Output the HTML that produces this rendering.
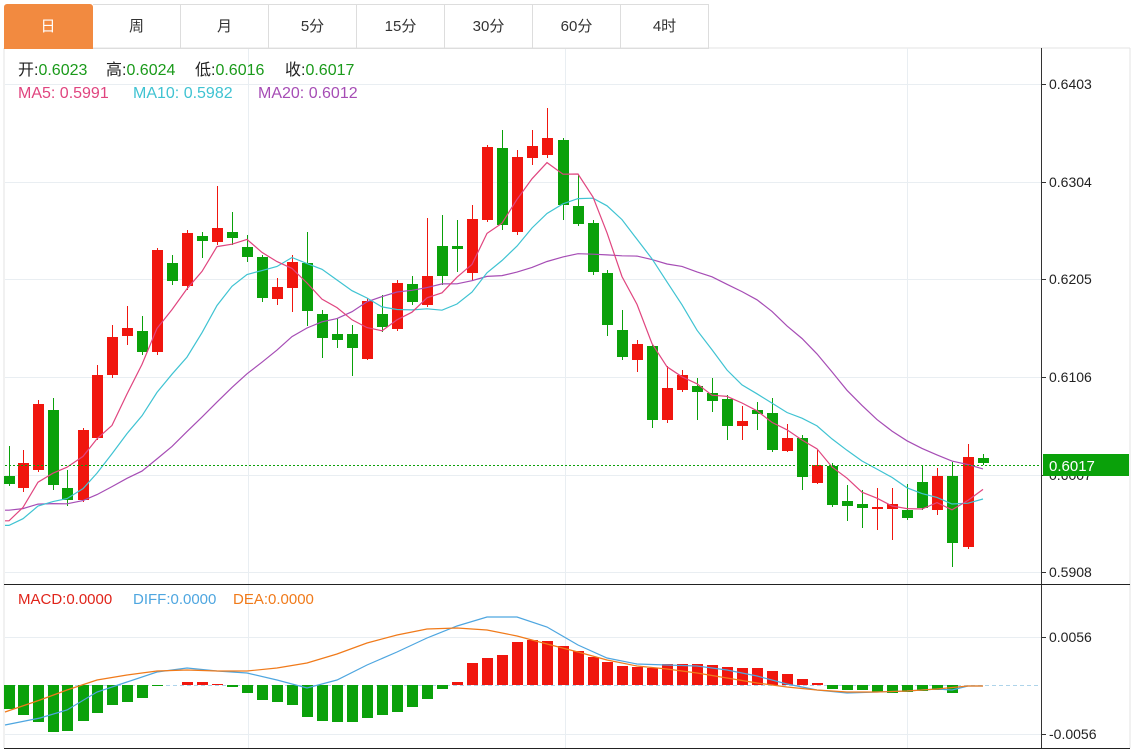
<!DOCTYPE html>
<html><head><meta charset="utf-8"><style>
body{margin:0;width:1135px;height:751px;background:#fff;overflow:hidden;font-family:"Liberation Sans","Noto Sans CJK SC",sans-serif}
svg{position:absolute;left:0;top:0}
.tabs{position:absolute;left:4px;top:4px;height:44px;display:flex}
.tab{width:87px;height:43px;border:1px solid #ddd;border-left:none;text-align:center;line-height:43px;font-size:15px;color:#333;box-sizing:content-box}
.tab.on{background:#f28a40;color:#fff;border-color:#f28a40;border-radius:3px 3px 0 0;width:88px}
</style></head><body>
<svg id="s" width="1135" height="751" font-family="Liberation Sans, Noto Sans CJK SC, sans-serif"></svg>
<div class="tabs"><div class="tab on">日</div><div class="tab">周</div><div class="tab">月</div><div class="tab">5分</div><div class="tab">15分</div><div class="tab">30分</div><div class="tab">60分</div><div class="tab">4时</div></div>
<script>
var S='';
function L(x1,y1,x2,y2,c,w,d){S+='<line x1="'+x1+'" y1="'+y1+'" x2="'+x2+'" y2="'+y2+'" stroke="'+c+'" stroke-width="'+(w||1)+'"'+(d?' stroke-dasharray="'+d+'"':'')+'/>';}
function T(x,y,t,c,sz){S+='<text x="'+x+'" y="'+y+'" fill="'+c+'" font-size="'+(sz||14)+'">'+t+'</text>';}
L(4,48,1130,48,'#e3e3e3');L(1130,48,1130,748,'#e3e3e3');L(4,48,4,748,'#e3e3e3');
[84,182,279,377,475,572,637,734].forEach(function(y){L(5,y+.5,1041,y+.5,'#e9eef2');});
[248,565,907].forEach(function(x){L(x+.5,48,x+.5,748,'#e9eef2');});
L(1041.5,48,1041.5,748,'#333');L(4,584.5,1130,584.5,'#222');L(4,748.5,1130,748.5,'#222');
var tk=[[84,'0.6403'],[182,'0.6304'],[279,'0.6205'],[377,'0.6106'],[475,'0.6007'],[572,'0.5908'],[637,'0.0056'],[734,'-0.0056']];
tk.forEach(function(t){L(1041,t[0]+.5,1046,t[0]+.5,'#333');T(1049,t[0]+5,t[1],'#222',14);});
var C=[[9,476,484,446,486,0],[23,488,463,450,492,1],[38,470,404,400,472,1],[53,410,485,398,490,0],[67,488,500,470,506,0],[83,500,430,428,502,1],[97,438,375,365,440,1],[112,375,337,325,378,1],[127,336,328,306,345,1],[142,331,352,316,355,0],[157,352,250,248,355,1],[172,263,281,255,285,0],[187,286,233,230,290,1],[202,236,241,232,258,0],[217,242,228,186,245,1],[232,232,238,212,245,0],[247,247,257,235,262,0],[262,257,298,255,302,0],[277,299,287,278,305,1],[292,288,262,255,312,1],[307,263,311,232,326,0],[322,314,338,310,358,0],[337,334,340,318,348,0],[352,334,348,325,376,0],[367,359,301,298,360,1],[382,314,327,295,332,0],[397,329,283,280,331,1],[412,284,302,276,305,0],[427,305,276,218,307,1],[442,246,276,215,285,0],[457,246,249,220,272,0],[472,273,219,205,280,1],[487,220,147,145,222,1],[502,148,225,130,230,0],[517,232,157,150,235,1],[532,158,146,130,165,1],[547,155,138,108,158,1],[563,140,205,138,220,0],[578,206,224,175,226,0],[593,223,272,220,275,0],[607,273,325,270,336,0],[622,330,357,310,360,0],[637,360,344,340,372,1],[652,346,420,345,428,0],[667,420,388,366,423,1],[682,390,375,370,392,1],[697,386,392,378,420,0],[712,393,401,378,412,0],[727,399,426,395,440,0],[742,426,421,406,440,1],[757,410,414,402,430,0],[772,413,450,398,452,0],[787,451,438,424,452,1],[802,438,477,435,490,0],[817,483,465,450,484,1],[832,466,505,463,507,0],[847,501,506,485,521,0],[862,504,508,490,528,0],[877,509,507,488,530,1],[892,509,504,488,540,1],[907,510,518,484,520,0],[922,482,508,466,510,0],[937,510,476,468,515,1],[952,476,543,462,567,0],[968,547,457,444,549,1],[983,458,463,454,465,0]];
var R='#f0160e',G='#0aa10a';
C.forEach(function(c){var col=c[5]?R:G;L(c[0]+.5,c[3],c[0]+.5,c[4],col);var t=Math.min(c[1],c[2]),h=Math.max(2,Math.abs(c[1]-c[2]));S+='<rect x="'+(c[0]-5)+'" y="'+t+'" width="11" height="'+h+'" fill="'+col+'"/>';});
var cl=[];for(var i=0;i<10;i++)cl.push(495);for(var i=0;i<9;i++)cl.push(530);C.forEach(function(c){cl.push(c[2]);});
function ma(n,col){var p=[];for(var i=0;i<C.length;i++){var k=i+19,s=0;for(var j=0;j<n;j++)s+=cl[k-j];p.push(C[i][0]+','+(s/n).toFixed(1));}S+='<polyline points="5,'+p[0].split(',')[1]+' '+p.join(' ')+'" fill="none" stroke="'+col+'" stroke-width="1.2"/>';}
ma(20,'#a64db5');ma(10,'#3fc3d2');ma(5,'#e0457f');
L(5,465.5,1041,465.5,G,1,'2,2');
S+='<rect x="1043" y="454" width="86" height="22" fill="'+G+'"/>';T(1049,471,'0.6017','#fff',15);
var M=[-24,-30,-37,-47,-46,-36,-28,-20,-17,-13,-1,0,3,3,1,-2,-8,-15,-17,-20,-32,-36,-37,-37,-33,-30,-27,-22,-14,-4,3,22,27,30,43,45,44,39,34,28,23,19,18,17,21,21,21,20,18,17,17,14,11,6,2,-4,-5,-5,-7,-8,-7,-6,-5,-8,0,0];
L(5,685.5,1041,685.5,'#aed4ea',1,'4,3');
C.forEach(function(c,i){var v=M[i];if(!v)return;var col=v>0?R:G;S+='<rect x="'+(c[0]-5)+'" y="'+(v>0?685-v:685)+'" width="11" height="'+Math.abs(v)+'" fill="'+col+'"/>';});
S+='<polyline fill="none" stroke="#4ea6e0" stroke-width="1.2" points="5,725 40,718 67,710 97,692 127,682 157,672 187,668 217,671 247,673 277,680 307,688 337,680 367,665 397,652 427,638 457,626 487,617 517,617 547,627 578,645 607,658 637,664 667,665 697,666 727,670 757,676 787,684 817,690 847,693 877,692 907,691 937,689 952,690 968,686 983,686"/>';
S+='<polyline fill="none" stroke="#f07a1a" stroke-width="1.2" points="5,712 40,700 67,690 97,680 127,675 157,671 187,670 217,671 247,671 277,668 307,663 337,654 367,643 397,635 427,629 457,628 487,630 517,636 547,644 578,652 607,660 637,666 667,669 697,673 727,678 757,683 787,687 817,690 847,692 877,692 907,691 937,689 968,686 983,686"/>';
function H(x,y,a,b,c1,c2){S+='<text x="'+x+'" y="'+y+'" font-size="16"><tspan fill="'+c1+'">'+a+'</tspan><tspan fill="'+c2+'">'+b+'</tspan></text>';}
var g='#1a9a1a',k='#222';
H(18,75,'开:','0.6023',k,g);H(106,75,'高:','0.6024',k,g);H(195,75,'低:','0.6016',k,g);H(285,75,'收:','0.6017',k,g);
H(18,98,'MA5: 0.5991','','#e0457f','');H(133,98,'MA10: 0.5982','','#3fc3d2','');H(258,98,'MA20: 0.6012','','#a64db5','');
T(18,604,'MACD:0.0000','#e0241a',15);T(133,604,'DIFF:0.0000','#4ea6e0',15);T(233,604,'DEA:0.0000','#f07a1a',15);
document.getElementById('s').innerHTML=S;
</script>
</body></html>
